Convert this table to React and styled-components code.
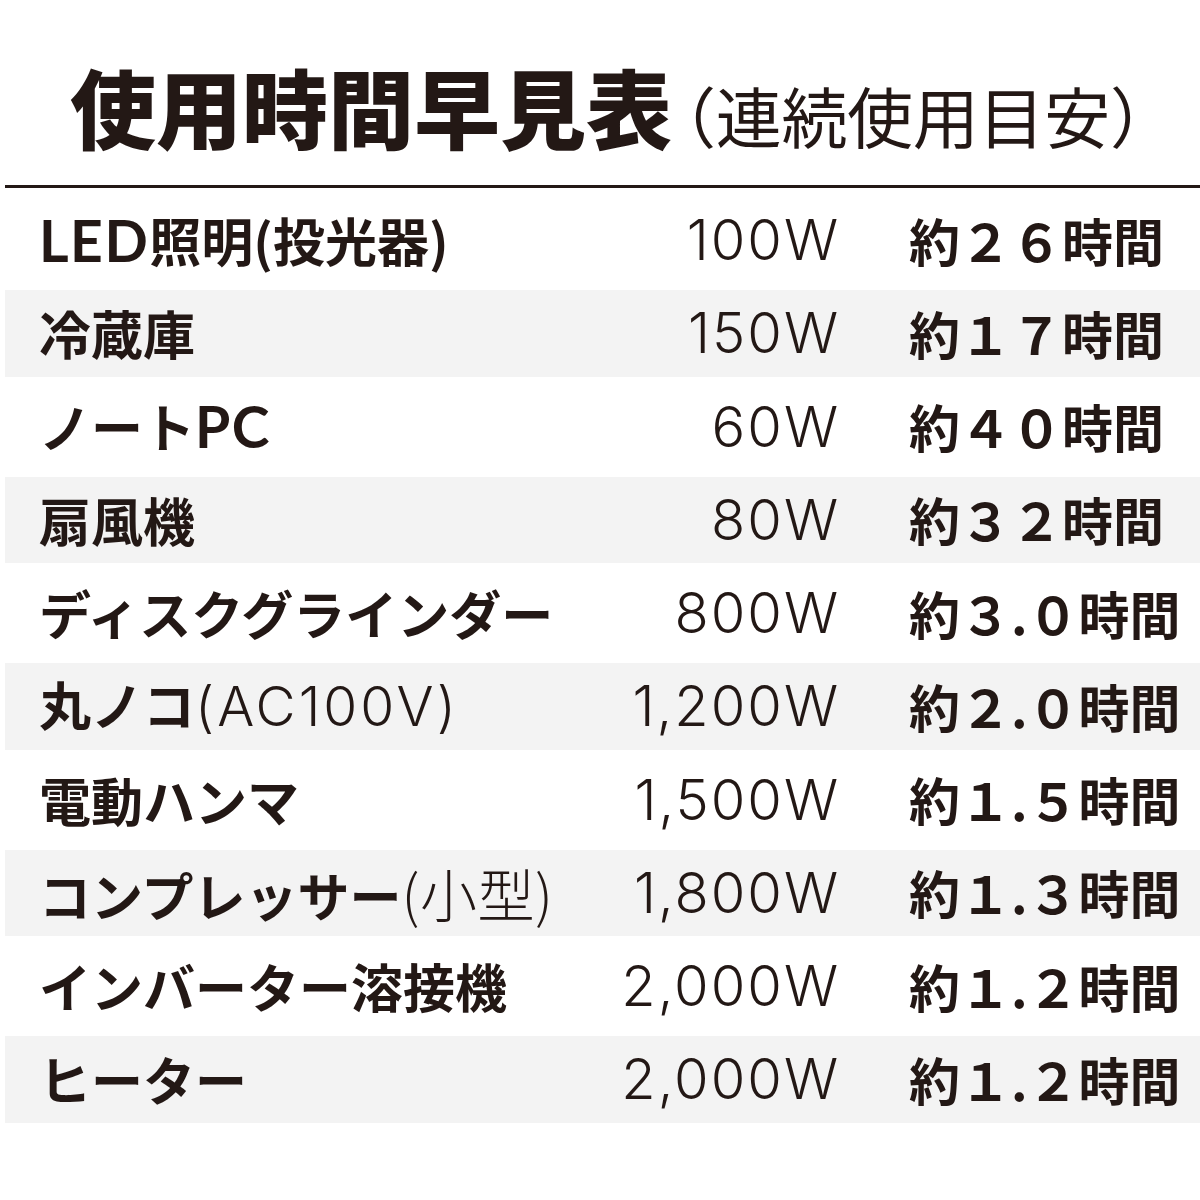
import React from "react";
import styled, { createGlobalStyle } from "styled-components";

const Global = createGlobalStyle`
  html, body { margin: 0; padding: 0; background: #ffffff; }
  body { font-family: "Noto Sans CJK JP", "Noto Sans", sans-serif; color: #231815; }
`;

const Page = styled.div`
  width: 1200px;
  height: 1200px;
  box-sizing: border-box;
  padding-left: 5px;
  background: #fff;
`;

const Header = styled.header`
  height: 188px;
  box-sizing: border-box;
  padding: 56px 0 0 65px;
  display: flex;
  align-items: baseline;
  border-bottom: 3px solid #231815;
`;

const Title = styled.h1`
  margin: 0;
  font-size: 86px;
  line-height: 100px;
  font-weight: 900;
  letter-spacing: 0;
`;

const Sub = styled.span`
  font-size: 66px;
  line-height: 100px;
  font-weight: 400;
  margin-left: -22px;
  letter-spacing: -0.3px;
`;

const Table = styled.div`
  display: flex;
  flex-direction: column;
  margin-top: 2px;
`;

const Row = styled.div`
  display: grid;
  grid-template-columns: 1fr 300px 292px;
  align-items: center;
  height: ${(p) => (p.$shade ? "86.5px" : "100px")};
  background: ${(p) => (p.$shade ? "#f3f3f3" : "transparent")};
  padding-left: 34px;
`;

const Label = styled.div`
  font-size: 52px;
  font-weight: 700;
  white-space: nowrap;
  line-height: 1;
`;

const Latin = styled.span`
  font-family: "Lato", "Noto Sans CJK JP", sans-serif;
  font-weight: 700;
  font-size: 57px;
  letter-spacing: 1.5px;
`;

const Light = styled.span`
  font-family: "Inter", "Noto Sans CJK JP", sans-serif;
  font-weight: 300;
  font-size: 55px;
  letter-spacing: 3px;
`;

const LightCJK = styled.span`
  font-weight: 300;
  font-size: 57px;
  letter-spacing: 0.5px;
`;

const Watts = styled.div`
  font-family: "Inter", sans-serif;
  font-weight: 300;
  font-size: 56px;
  letter-spacing: 2px;
  text-align: right;
  padding-right: 68px;
  line-height: 1;
`;

const Hours = styled.div`
  font-size: 51px;
  font-weight: 700;
  white-space: nowrap;
  line-height: 1;
  padding-left: 1px;
`;

const rows = [
  { label: <><Latin>LED</Latin>照明(投光器)</>, w: "100W", h: "約２６時間" },
  { label: <>冷蔵庫</>, w: "150W", h: "約１７時間" },
  { label: <>ノート<Latin>PC</Latin></>, w: "60W", h: "約４０時間" },
  { label: <>扇風機</>, w: "80W", h: "約３２時間" },
  { label: <>ディスクグラインダー</>, w: "800W", h: "約３.０時間" },
  { label: <>丸ノコ<Light>(AC100V)</Light></>, w: "1,200W", h: "約２.０時間" },
  { label: <>電動ハンマ</>, w: "1,500W", h: "約１.５時間" },
  { label: <>コンプレッサー<LightCJK>(小型)</LightCJK></>, w: "1,800W", h: "約１.３時間" },
  { label: <>インバーター溶接機</>, w: "2,000W", h: "約１.２時間" },
  { label: <>ヒーター</>, w: "2,000W", h: "約１.２時間" },
];

export default function App() {
  return (
    <>
      <Global />
      <Page>
        <Header>
          <Title>使用時間早見表</Title>
          <Sub>（連続使用目安）</Sub>
        </Header>
        <Table>
          {rows.map((r, i) => (
            <Row key={i} $shade={i % 2 === 1}>
              <Label>{r.label}</Label>
              <Watts>{r.w}</Watts>
              <Hours>{r.h}</Hours>
            </Row>
          ))}
        </Table>
      </Page>
    </>
  );
}
